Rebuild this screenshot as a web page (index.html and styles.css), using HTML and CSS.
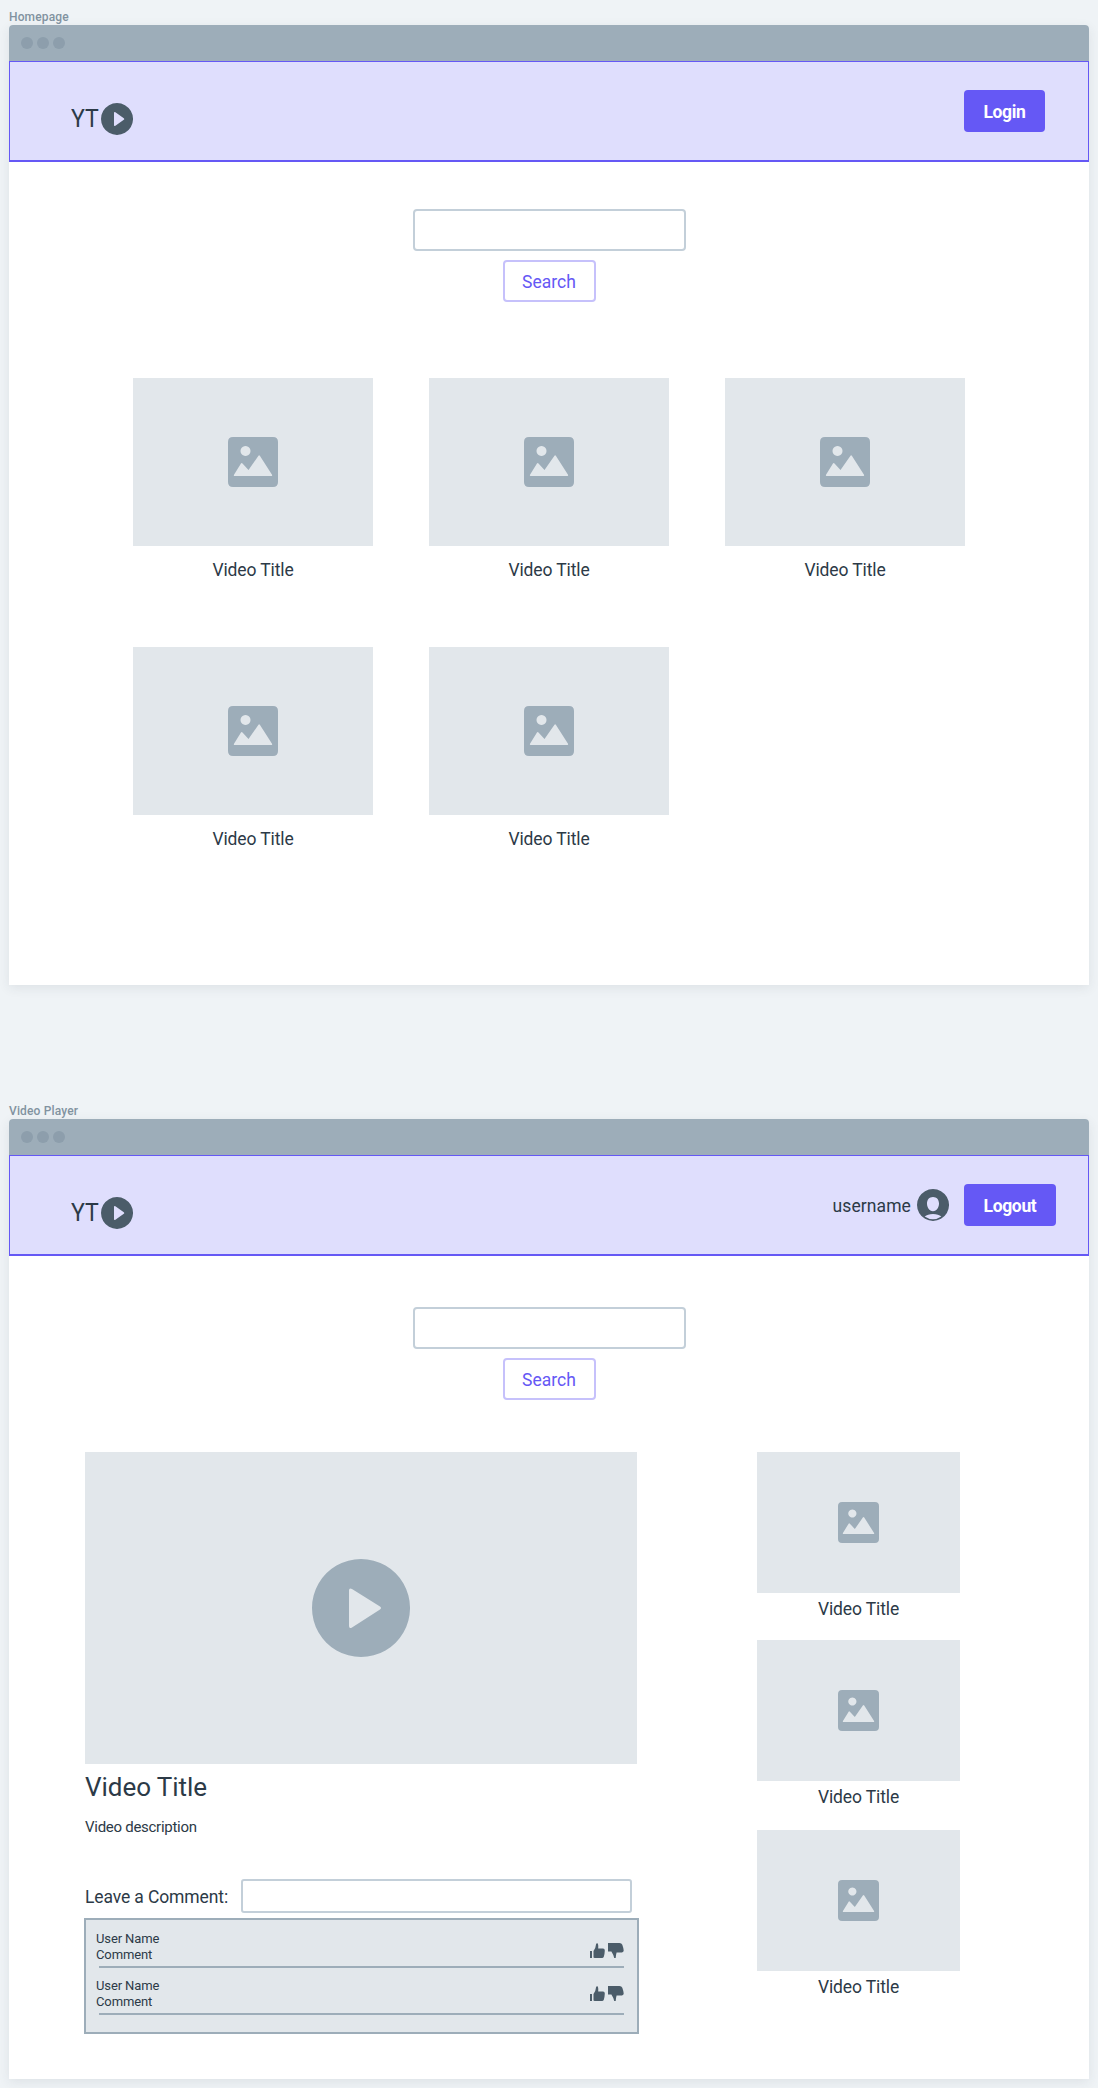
FILE: index.html
```html
<!DOCTYPE html>
<html lang="en">
<head>
<meta charset="utf-8">
<title>YT wireframes</title>
<link rel="stylesheet" href="styles.css">
</head>
<body>
<svg class="defs" aria-hidden="true">
  <symbol id="picture" viewBox="0 0 50 50"><path class="slate" fill-rule="evenodd" d="M5 0H45Q50 0 50 5V45Q50 50 45 50H5Q0 50 0 45V5Q0 0 5 0ZM17.500 9a5 5 0 1 0 .01 0ZM6.500 39H43.500Q44.500 39 44 37.800L32 19Q31.200 17.500 30.300 19L20.500 33 14.500 26.500Q13.500 25.500 12.800 26.700L6 37.800Q5.500 39 6.500 39Z"/></symbol>
  <symbol id="play" viewBox="0 0 98 98"><path fill-rule="evenodd" d="M49 0a49 49 0 1 0 .01 0ZM37 31.500Q37 28.500 40 30L68 47.500Q70 49 68 50.500L40 68.500Q37 70 37 67Z"/></symbol>
  <symbol id="logo-play" viewBox="0 0 32 32"><path fill-rule="evenodd" d="M16 0a16 16 0 1 0 .01 0ZM13 10Q13 8.400 14.400 9.200L22.800 15.200Q23.700 16 22.800 16.800L14.400 22.800Q13 23.600 13 22Z"/></symbol>
  <symbol id="avatar" viewBox="0 0 32 32"><path fill-rule="evenodd" d="M16 0a16 16 0 1 0 .01 0ZM16 8C19.800 8 22 10.800 22 14.500S19.800 22.300 16 22.300 10 18.200 10 14.500 12.200 8 16 8ZM7.700 27.500Q10.500 25 16 25T24.300 27.500Q20.500 30.200 16 30.200T7.700 27.500Z"/></symbol>
  <symbol id="thumb-up" viewBox="0 0 15 15"><path d="M0 8H2V15H0ZM3.500 8Q5.800 5 6 1.500 6.200 0 7.500 .2 8.500 1 8.200 5.500H13Q14.800 5.600 14.800 7.500 14.700 11 13.800 13.700 13.300 15 12 15H4.500L3.500 14.500Z"/></symbol>
  <symbol id="thumb-down" viewBox="0 0 16 15"><path d="M0 0H11.500Q13.600 0 14.300 1.800 15.300 4.500 15.700 7.500 15.700 9.300 14 9.400H8.600Q7.800 12 7.700 15H6.200Q5.600 12 3.400 8.600H0Z"/></symbol>
</svg>

<h2 class="label">Homepage</h2>
<section class="frame">
  <div class="bar"><i></i><i></i><i></i></div>
  <header class="header">
    <div class="logo"><span>YT</span><svg><use href="#logo-play"/></svg></div>
    <button class="primary login">Login</button>
  </header>
  <div class="search"><input type="text"><button>Search</button></div>
  <div class="grid">
    <div class="card"><div class="thumbnail"><svg><use href="#picture"/></svg></div><span>Video Title</span></div>
    <div class="card"><div class="thumbnail"><svg><use href="#picture"/></svg></div><span>Video Title</span></div>
    <div class="card"><div class="thumbnail"><svg><use href="#picture"/></svg></div><span>Video Title</span></div>
    <div class="card"><div class="thumbnail"><svg><use href="#picture"/></svg></div><span>Video Title</span></div>
    <div class="card"><div class="thumbnail"><svg><use href="#picture"/></svg></div><span>Video Title</span></div>
  </div>
</section>

<h2 class="label second">Video Player</h2>
<section class="frame">
  <div class="bar"><i></i><i></i><i></i></div>
  <header class="header">
    <div class="logo"><span>YT</span><svg><use href="#logo-play"/></svg></div>
    <div class="user"><span>username</span><svg><use href="#avatar"/></svg></div>
    <button class="primary logout">Logout</button>
  </header>
  <div class="search lower"><input type="text"><button>Search</button></div>
  <div class="watch">
    <main>
      <div class="player"><svg><use href="#play"/></svg></div>
      <h1>Video Title</h1>
      <p class="description">Video description</p>
      <div class="leave"><label for="comment">Leave a Comment:</label><input id="comment" type="text"></div>
      <div class="comments">
        <div class="comment">
          <div class="text"><span>User Name</span><span>Comment</span></div>
          <div class="votes"><svg><use href="#thumb-up"/></svg><svg class="down"><use href="#thumb-down"/></svg></div>
        </div>
        <div class="comment">
          <div class="text"><span>User Name</span><span>Comment</span></div>
          <div class="votes raised"><svg><use href="#thumb-up"/></svg><svg class="down"><use href="#thumb-down"/></svg></div>
        </div>
      </div>
    </main>
    <aside>
      <div class="card"><div class="thumbnail"><svg><use href="#picture"/></svg></div><span>Video Title</span></div>
      <div class="card"><div class="thumbnail"><svg><use href="#picture"/></svg></div><span>Video Title</span></div>
      <div class="card"><div class="thumbnail"><svg><use href="#picture"/></svg></div><span>Video Title</span></div>
    </aside>
  </div>
</section>
</body>
</html>
```
FILE: styles.css
```css
* { box-sizing: border-box; }
body {
  margin: 0;
  padding: 0 9px 9px;
  height: 2088px;
  overflow: hidden;
  background: #eff3f6;
  color: #2c3a47;
  font-family: Roboto, "Liberation Sans", sans-serif;
  font-size: 17.5px;
  letter-spacing: -0.12px;
}
svg { display: block; fill: #4b5c69; }
.defs { position: absolute; width: 0; height: 0; }
.slate { fill: #9dadb9; }
button, input { font: inherit; letter-spacing: inherit; padding: 0; }
.label {
  margin: 0;
  height: 25px;
  padding-top: 9px;
  font-size: 12px;
  line-height: 16px;
  font-weight: 500;
  letter-spacing: 0.15px;
  color: #8192a0;
}
.label.second { height: 134px; padding-top: 118px; }
.frame {
  height: 960px;
  background: #fff;
  border-radius: 4px 4px 0 0;
  box-shadow: 0 3px 12px rgba(44, 58, 71, .09);
}
.bar {
  display: flex;
  align-items: center;
  gap: 4px;
  height: 36px;
  padding-left: 12px;
  background: #9dadb9;
  border-radius: 4px 4px 0 0;
}
.bar i { width: 12px; height: 12px; border-radius: 50%; background: #8d9eac; }
.header {
  display: flex;
  align-items: flex-start;
  height: 101px;
  background: #dfdefd;
  border: 1px solid #6558f5;
  border-bottom-width: 2px;
}
.logo { display: flex; margin: 41px auto 0 61px; }
.logo span { width: 30px; font-size: 26.5px; line-height: 30px; font-weight: 400; transform: scaleX(.87); transform-origin: left; }
.logo svg { width: 32px; height: 32px; }
.primary {
  height: 42px;
  margin-top: 28px;
  padding-top: 2px;
  border: 0;
  border-radius: 4px;
  background: #6558f5;
  color: #fff;
  font-weight: 700;
  letter-spacing: -0.35px;
}
.login { width: 81px; margin-right: 43px; }
.logout { width: 92px; margin-right: 32px; }
.user { display: flex; align-items: center; gap: 6px; margin: 33px 15px 0 0; letter-spacing: 0.1px; }
.user span { padding-top: 2px; }
.user svg { width: 32px; height: 32px; }
.search { display: flex; flex-direction: column; align-items: center; gap: 9px; padding-top: 47px; height: 216px; }
.search input { width: 273px; height: 42px; border: 2px solid #c3cfd9; border-radius: 4px; background: #fff; }
.search button { width: 93px; height: 42px; padding-top: 2px; border: 2px solid #c6c1fb; border-radius: 4px; background: #fff; color: #6558f5; letter-spacing: 0; }
.search.lower { padding-top: 51px; height: 196px; }
.grid { display: grid; grid-template-columns: repeat(3, 240px); column-gap: 56px; row-gap: 67px; justify-content: center; }
.card { display: flex; flex-direction: column; align-items: center; }
.card span { line-height: 20px; }
.thumbnail { display: flex; flex: none; align-items: center; justify-content: center; background: #e2e7eb; }
.grid .thumbnail { width: 240px; height: 168px; margin-bottom: 14px; }
.grid svg { width: 50px; height: 50px; }
.watch { display: flex; justify-content: space-between; padding: 0 129px 0 76px; }
main { width: 552px; }
.player { display: flex; align-items: center; justify-content: center; height: 312px; background: #e2e7eb; }
.player svg { width: 98px; height: 98px; fill: #9dadb9; }
h1 { margin: 7px 0 0; font-size: 26px; line-height: 32px; font-weight: 400; letter-spacing: -0.05px; }
.description { margin: 14px 0 0; font-size: 15px; line-height: 20px; letter-spacing: -0.28px; }
.leave { display: flex; align-items: center; margin-top: 42px; }
.leave label { width: 156px; padding-top: 2px; letter-spacing: -0.12px; }
.leave input { width: 391px; height: 34px; border: 2px solid #c3cfd9; border-radius: 3px; background: #fff; }
.comments { width: 555px; height: 116px; margin: 5px 0 0 -1px; padding: 0 13px; border: 2px solid #9dadb9; background: #e2e7eb; }
.comment { display: flex; justify-content: space-between; height: 47px; border-bottom: 2px solid #9dadb9; }
.comment:first-child { height: 48px; }
.comment .text { display: flex; flex-direction: column; justify-content: flex-end; margin-left: -3px; padding-bottom: 3px; font-size: 13px; line-height: 16px; letter-spacing: -0.12px; }
.votes { display: flex; gap: 3px; align-items: flex-end; padding-bottom: 8px; }
.votes.raised { padding-bottom: 12px; }
.votes svg { width: 15px; height: 15px; }
.votes .down { width: 16px; }
aside { display: flex; flex-direction: column; width: 203px; }
aside .thumbnail { width: 203px; height: 141px; margin-bottom: 6px; }
aside .card { height: 188px; }
aside .card:nth-child(2) { height: 190px; }
aside svg { width: 41px; height: 41px; }
```
